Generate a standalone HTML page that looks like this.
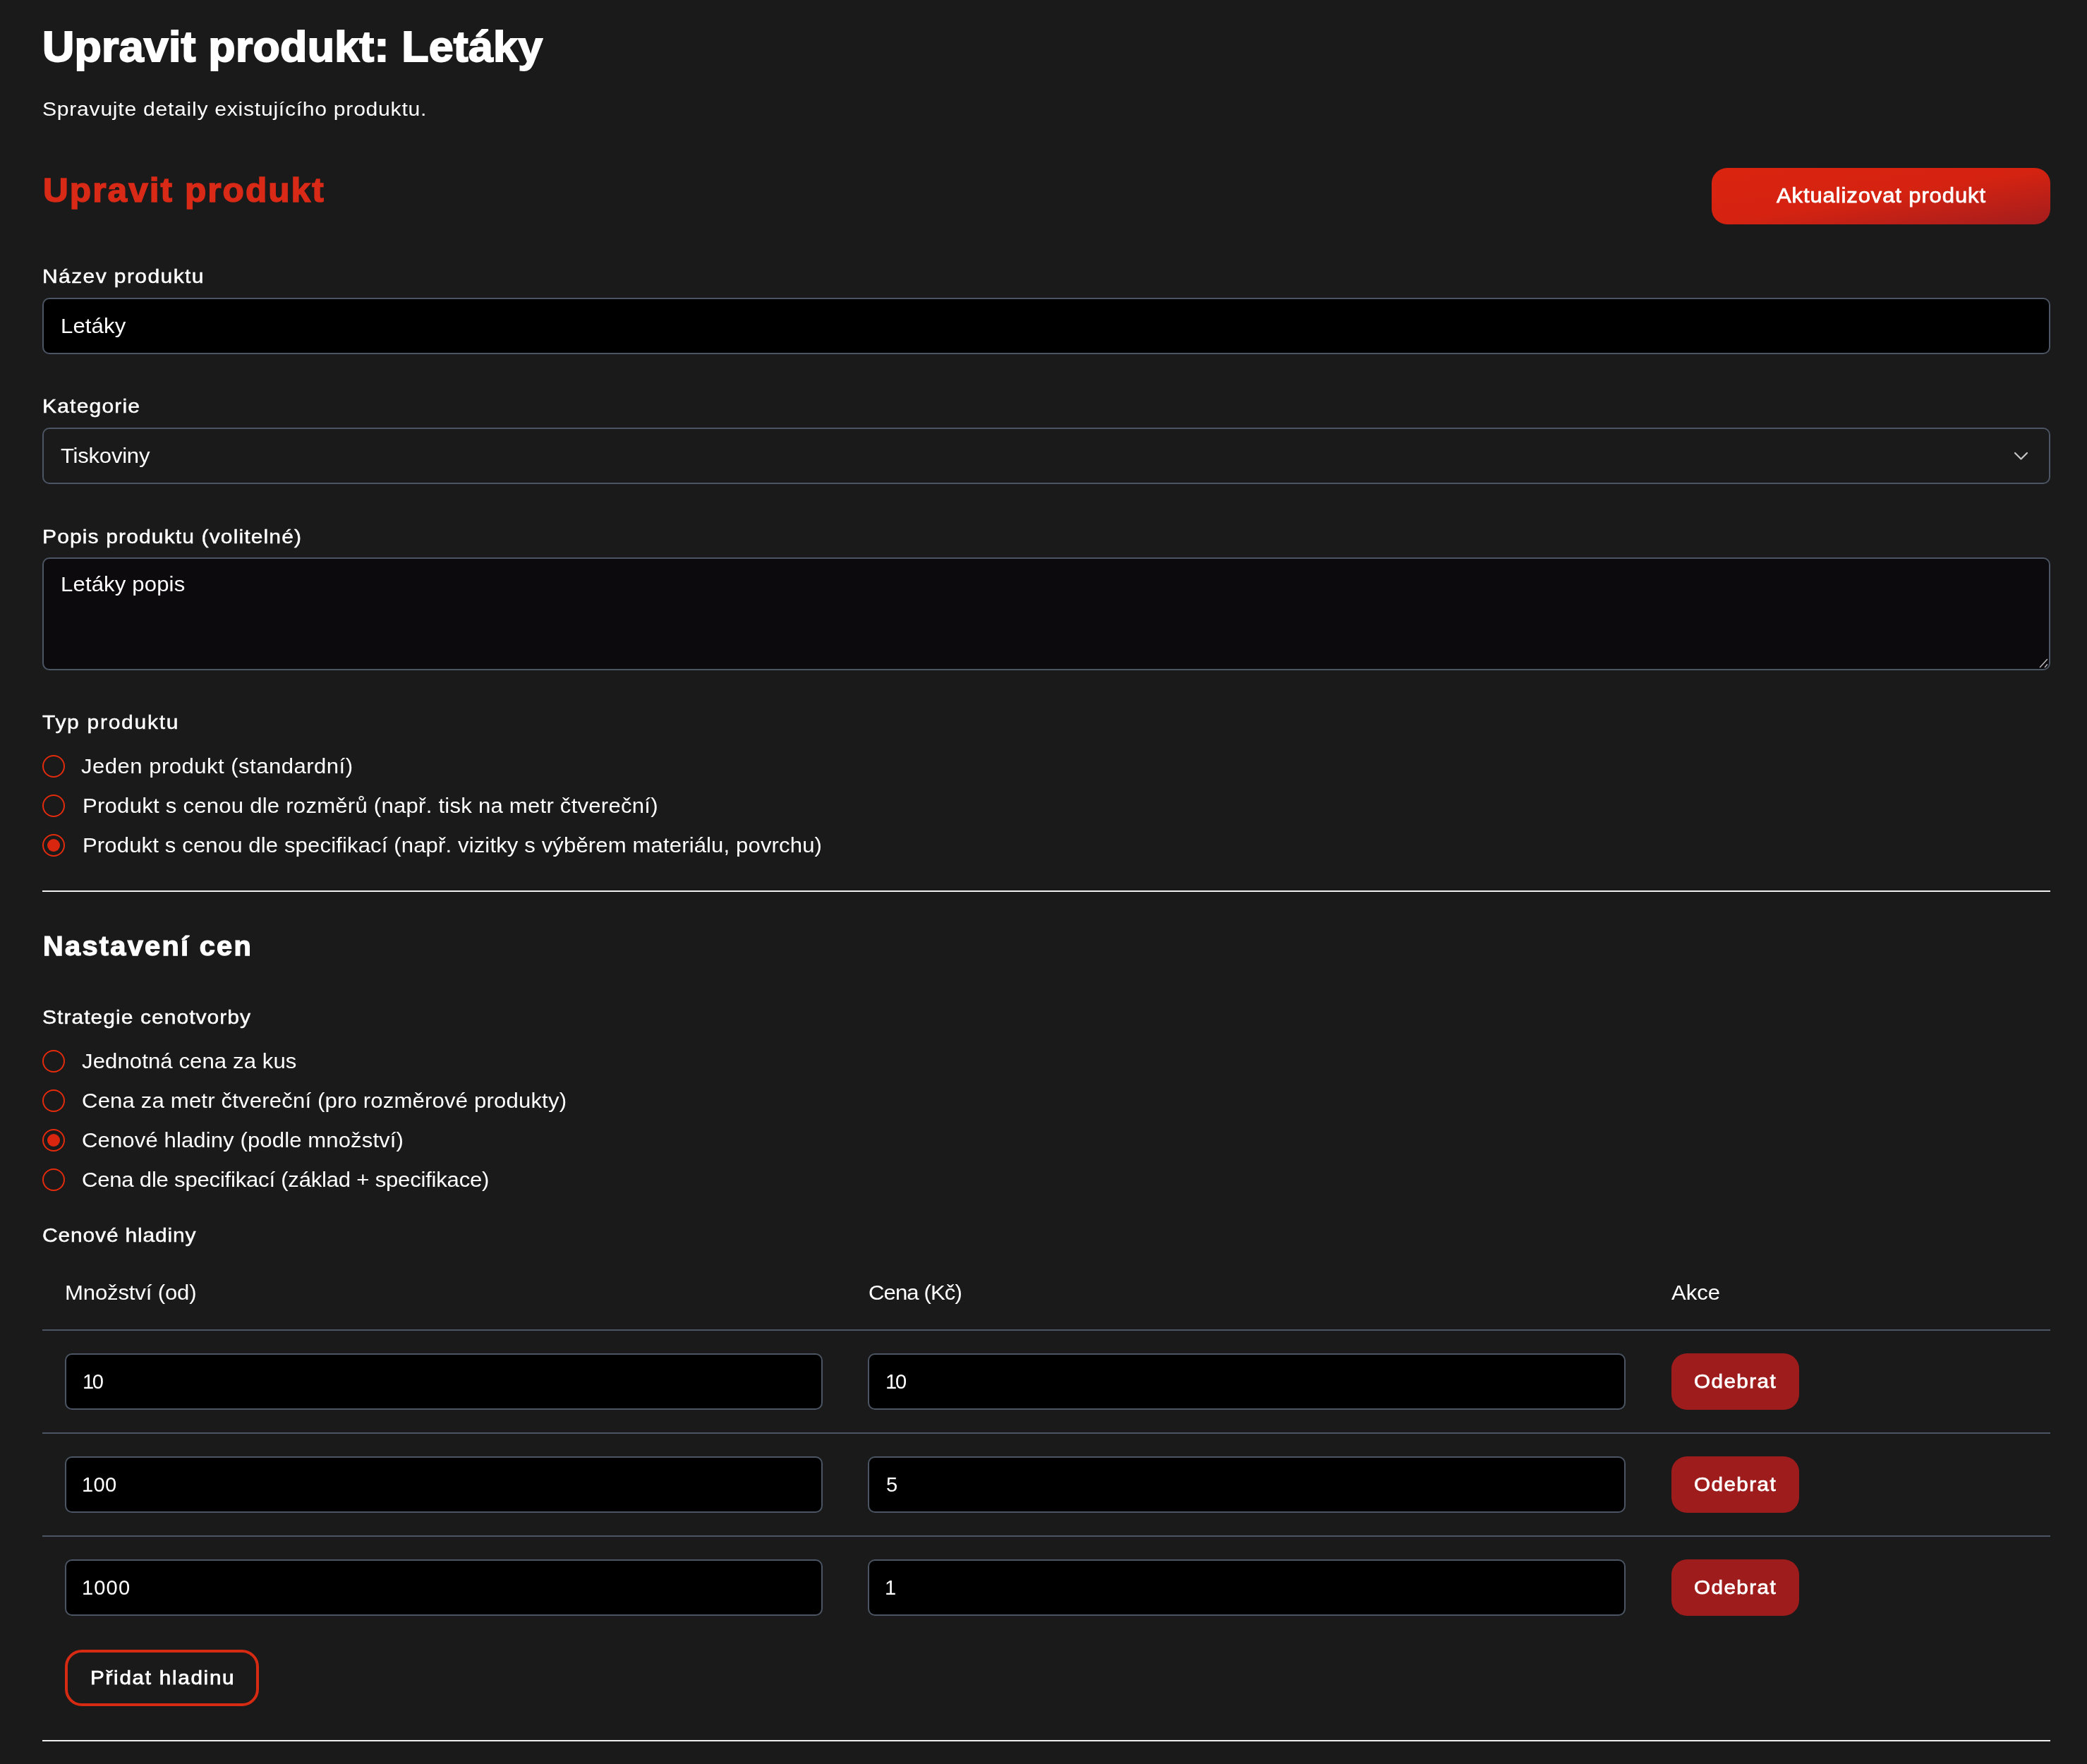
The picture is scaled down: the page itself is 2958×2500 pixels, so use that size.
<!DOCTYPE html>
<html lang="cs"><head><meta charset="utf-8"><title>Upravit produkt: Letáky</title>
<style>
html,body{margin:0;padding:0}
body{width:2958px;height:2500px;overflow:hidden;background:#1a1a1a;position:relative;font-family:"Liberation Sans",sans-serif;}
.t{position:absolute;white-space:nowrap;will-change:transform;margin:0;padding:0;display:block;font-family:"Liberation Sans",sans-serif;}
</style></head><body>
<div style="position:absolute;left:2426px;top:238px;width:480px;height:80px;box-sizing:border-box;border-radius:22px;background:linear-gradient(to bottom right,#da2410 0%,#d52311 50%,#a31d1d 100%);"></div>
<div style="position:absolute;left:60px;top:422px;width:2846px;height:80px;box-sizing:border-box;border:2px solid #4b5563;border-radius:10px;background:#000;"></div>
<div style="position:absolute;left:60px;top:606px;width:2846px;height:80px;box-sizing:border-box;border:2px solid #4b5563;border-radius:10px;"></div>
<svg style="position:absolute;left:2850px;top:636px" width="30" height="20" viewBox="0 0 30 20"><path d="M6 6 L14.5 14.5 L23 6" fill="none" stroke="#c4c4c4" stroke-width="2.3" stroke-linecap="round" stroke-linejoin="round"/></svg>
<div style="position:absolute;left:60px;top:790px;width:2846px;height:160px;box-sizing:border-box;border:2px solid #4b5563;border-radius:10px;background:#0c0a0c;"></div>
<svg style="position:absolute;left:2880px;top:925px" width="26" height="26" viewBox="0 0 26 26"><path d="M11.5 20.5 L21.5 9.5 M18.5 20.5 L21.5 16.8" fill="none" stroke="#b4b4b4" stroke-width="1.6" stroke-linecap="round"/></svg>
<div style="position:absolute;left:60px;top:1070px;width:32px;height:32px;box-sizing:border-box;border:2px solid #e32b0e;border-radius:50%;"></div>
<div style="position:absolute;left:60px;top:1126px;width:32px;height:32px;box-sizing:border-box;border:2px solid #e32b0e;border-radius:50%;"></div>
<div style="position:absolute;left:60px;top:1182px;width:32px;height:32px;box-sizing:border-box;border:2px solid #e32b0e;border-radius:50%;"></div><div style="position:absolute;left:66.7px;top:1188.7px;width:18.6px;height:18.6px;border-radius:50%;background:#d9270f"></div>
<div style="position:absolute;left:60px;top:1262px;width:2846px;height:2px;box-sizing:border-box;background:#f0f0f0;"></div>
<div style="position:absolute;left:60px;top:1488px;width:32px;height:32px;box-sizing:border-box;border:2px solid #e32b0e;border-radius:50%;"></div>
<div style="position:absolute;left:60px;top:1544px;width:32px;height:32px;box-sizing:border-box;border:2px solid #e32b0e;border-radius:50%;"></div>
<div style="position:absolute;left:60px;top:1600px;width:32px;height:32px;box-sizing:border-box;border:2px solid #e32b0e;border-radius:50%;"></div><div style="position:absolute;left:66.7px;top:1606.7px;width:18.6px;height:18.6px;border-radius:50%;background:#d9270f"></div>
<div style="position:absolute;left:60px;top:1656px;width:32px;height:32px;box-sizing:border-box;border:2px solid #e32b0e;border-radius:50%;"></div>
<div style="position:absolute;left:60px;top:1884px;width:2846px;height:2px;box-sizing:border-box;background:#4b5563;"></div>
<div style="position:absolute;left:92px;top:1918px;width:1074px;height:80px;box-sizing:border-box;border:2px solid #4b5563;border-radius:10px;background:#000;"></div>
<div style="position:absolute;left:1230px;top:1918px;width:1074px;height:80px;box-sizing:border-box;border:2px solid #4b5563;border-radius:10px;background:#000;"></div>
<div style="position:absolute;left:2369px;top:1918px;width:181px;height:80px;box-sizing:border-box;border-radius:22px;background:#9e1c1c;"></div>
<div style="position:absolute;left:92px;top:2064px;width:1074px;height:80px;box-sizing:border-box;border:2px solid #4b5563;border-radius:10px;background:#000;"></div>
<div style="position:absolute;left:1230px;top:2064px;width:1074px;height:80px;box-sizing:border-box;border:2px solid #4b5563;border-radius:10px;background:#000;"></div>
<div style="position:absolute;left:2369px;top:2064px;width:181px;height:80px;box-sizing:border-box;border-radius:22px;background:#9e1c1c;"></div>
<div style="position:absolute;left:92px;top:2210px;width:1074px;height:80px;box-sizing:border-box;border:2px solid #4b5563;border-radius:10px;background:#000;"></div>
<div style="position:absolute;left:1230px;top:2210px;width:1074px;height:80px;box-sizing:border-box;border:2px solid #4b5563;border-radius:10px;background:#000;"></div>
<div style="position:absolute;left:2369px;top:2210px;width:181px;height:80px;box-sizing:border-box;border-radius:22px;background:#9e1c1c;"></div>
<div style="position:absolute;left:60px;top:2030px;width:2846px;height:2px;box-sizing:border-box;background:#4b5563;"></div>
<div style="position:absolute;left:60px;top:2176px;width:2846px;height:2px;box-sizing:border-box;background:#4b5563;"></div>
<div style="position:absolute;left:92px;top:2338px;width:275px;height:80px;box-sizing:border-box;border:4px solid #d72a12;border-radius:24px;"></div>
<div style="position:absolute;left:60px;top:2466px;width:2846px;height:2px;box-sizing:border-box;background:#f0f0f0;"></div>
<h1 class="t" style="left:60.00px;top:35.20px;font-size:61.600px;line-height:61.600px;letter-spacing:0.1783px;color:#ffffff;font-weight:700;-webkit-text-stroke:1.9px #ffffff;transform:scaleX(1.02);transform-origin:0 0;">Upravit produkt: Letáky</h1>
<p class="t" style="left:60.00px;top:139.90px;font-size:28.200px;line-height:28.200px;letter-spacing:0.6710px;color:#ffffff;font-weight:400;transform:scaleX(1.07);transform-origin:0 0;">Spravujte detaily existujícího produktu.</p>
<h2 class="t" style="left:60.80px;top:245.40px;font-size:48.700px;line-height:48.700px;letter-spacing:1.9608px;color:#d92a17;font-weight:700;-webkit-text-stroke:1.5px #d92a17;transform:scaleX(1.02);transform-origin:0 0;">Upravit produkt</h2>
<span class="t" style="left:2517.60px;top:263.00px;font-size:29.000px;line-height:29.000px;letter-spacing:0.8165px;color:#ffffff;font-weight:400;-webkit-text-stroke:0.75px #ffffff;transform:scaleX(1.07);transform-origin:0 0;">Aktualizovat produkt</span>
<label class="t" style="left:59.80px;top:378.00px;font-size:28.100px;line-height:28.100px;letter-spacing:1.2940px;color:#ffffff;font-weight:400;-webkit-text-stroke:0.45px #ffffff;transform:scaleX(1.07);transform-origin:0 0;">Název produktu</label>
<span class="t" style="left:86.00px;top:448.20px;font-size:29.070px;line-height:29.070px;letter-spacing:0.1121px;color:#ffffff;font-weight:400;transform:scaleX(1.07);transform-origin:0 0;">Letáky</span>
<label class="t" style="left:59.80px;top:562.00px;font-size:28.100px;line-height:28.100px;letter-spacing:1.0981px;color:#ffffff;font-weight:400;-webkit-text-stroke:0.45px #ffffff;transform:scaleX(1.07);transform-origin:0 0;">Kategorie</label>
<span class="t" style="left:85.80px;top:632.00px;font-size:29.070px;line-height:29.070px;letter-spacing:-0.2336px;color:#ffffff;font-weight:400;transform:scaleX(1.07);transform-origin:0 0;">Tiskoviny</span>
<label class="t" style="left:59.70px;top:746.50px;font-size:28.100px;line-height:28.100px;letter-spacing:1.0393px;color:#ffffff;font-weight:400;-webkit-text-stroke:0.45px #ffffff;transform:scaleX(1.07);transform-origin:0 0;">Popis produktu (volitelné)</label>
<span class="t" style="left:86.00px;top:814.20px;font-size:29.070px;line-height:29.070px;letter-spacing:0.1359px;color:#ffffff;font-weight:400;transform:scaleX(1.07);transform-origin:0 0;">Letáky popis</span>
<label class="t" style="left:60.40px;top:1010.20px;font-size:28.100px;line-height:28.100px;letter-spacing:1.5803px;color:#ffffff;font-weight:400;-webkit-text-stroke:0.45px #ffffff;transform:scaleX(1.07);transform-origin:0 0;">Typ produktu</label>
<span class="t" style="left:114.70px;top:1072.00px;font-size:29.070px;line-height:29.070px;letter-spacing:0.4336px;color:#ffffff;font-weight:400;transform:scaleX(1.07);transform-origin:0 0;">Jeden produkt (standardní)</span>
<span class="t" style="left:116.60px;top:1128.00px;font-size:29.070px;line-height:29.070px;letter-spacing:0.2230px;color:#ffffff;font-weight:400;transform:scaleX(1.07);transform-origin:0 0;">Produkt s cenou dle rozměrů (např. tisk na metr čtvereční)</span>
<span class="t" style="left:116.60px;top:1184.00px;font-size:29.070px;line-height:29.070px;letter-spacing:0.1146px;color:#ffffff;font-weight:400;transform:scaleX(1.07);transform-origin:0 0;">Produkt s cenou dle specifikací (např. vizitky s výběrem materiálu, povrchu)</span>
<h3 class="t" style="left:60.60px;top:1320.50px;font-size:39.000px;line-height:39.000px;letter-spacing:2.2222px;color:#ffffff;font-weight:700;-webkit-text-stroke:1.25px #ffffff;transform:scaleX(1.02);transform-origin:0 0;">Nastavení cen</h3>
<label class="t" style="left:59.70px;top:1428.00px;font-size:28.100px;line-height:28.100px;letter-spacing:0.9543px;color:#ffffff;font-weight:400;-webkit-text-stroke:0.45px #ffffff;transform:scaleX(1.07);transform-origin:0 0;">Strategie cenotvorby</label>
<span class="t" style="left:115.50px;top:1490.00px;font-size:29.070px;line-height:29.070px;letter-spacing:0.0885px;color:#ffffff;font-weight:400;transform:scaleX(1.07);transform-origin:0 0;">Jednotná cena za kus</span>
<span class="t" style="left:115.70px;top:1546.20px;font-size:29.070px;line-height:29.070px;letter-spacing:0.1585px;color:#ffffff;font-weight:400;transform:scaleX(1.07);transform-origin:0 0;">Cena za metr čtvereční (pro rozměrové produkty)</span>
<span class="t" style="left:115.70px;top:1602.20px;font-size:29.070px;line-height:29.070px;letter-spacing:0.0935px;color:#ffffff;font-weight:400;transform:scaleX(1.07);transform-origin:0 0;">Cenové hladiny (podle množství)</span>
<span class="t" style="left:115.70px;top:1658.00px;font-size:29.070px;line-height:29.070px;letter-spacing:-0.2092px;color:#ffffff;font-weight:400;transform:scaleX(1.07);transform-origin:0 0;">Cena dle specifikací (základ + specifikace)</span>
<label class="t" style="left:60.00px;top:1737.20px;font-size:28.100px;line-height:28.100px;letter-spacing:0.7477px;color:#ffffff;font-weight:400;-webkit-text-stroke:0.45px #ffffff;transform:scaleX(1.07);transform-origin:0 0;">Cenové hladiny</label>
<span class="t" style="left:92.00px;top:1818.30px;font-size:29.070px;line-height:29.070px;letter-spacing:-0.1402px;color:#ffffff;font-weight:400;transform:scaleX(1.07);transform-origin:0 0;">Množství (od)</span>
<span class="t" style="left:1230.90px;top:1818.30px;font-size:29.070px;line-height:29.070px;letter-spacing:-0.8411px;color:#ffffff;font-weight:400;transform:scaleX(1.07);transform-origin:0 0;">Cena (Kč)</span>
<span class="t" style="left:2368.80px;top:1818.30px;font-size:29.070px;line-height:29.070px;letter-spacing:0.0000px;color:#ffffff;font-weight:400;transform:scaleX(1.07);transform-origin:0 0;">Akce</span>
<span class="t" style="left:116.60px;top:1944.20px;font-size:29.070px;line-height:29.070px;letter-spacing:-2.4000px;color:#ffffff;font-weight:400;transform:scaleX(1.0);transform-origin:0 0;">10</span>
<span class="t" style="left:1254.80px;top:1944.20px;font-size:29.070px;line-height:29.070px;letter-spacing:-2.2000px;color:#ffffff;font-weight:400;transform:scaleX(1.0);transform-origin:0 0;">10</span>
<span class="t" style="left:116.00px;top:2090.00px;font-size:29.070px;line-height:29.070px;letter-spacing:0.3000px;color:#ffffff;font-weight:400;transform:scaleX(1.0);transform-origin:0 0;">100</span>
<span class="t" style="left:1255.80px;top:2090.00px;font-size:29.070px;line-height:29.070px;letter-spacing:4.8000px;color:#ffffff;font-weight:400;transform:scaleX(1.0);transform-origin:0 0;">5</span>
<span class="t" style="left:116.00px;top:2236.00px;font-size:29.070px;line-height:29.070px;letter-spacing:1.1333px;color:#ffffff;font-weight:400;transform:scaleX(1.0);transform-origin:0 0;">1000</span>
<span class="t" style="left:1254.20px;top:2236.00px;font-size:29.070px;line-height:29.070px;letter-spacing:-17.6000px;color:#ffffff;font-weight:400;transform:scaleX(1.0);transform-origin:0 0;">1</span>
<span class="t" style="left:2401.00px;top:1944.00px;font-size:27.700px;line-height:27.700px;letter-spacing:1.3396px;color:#ffffff;font-weight:400;-webkit-text-stroke:0.75px #ffffff;transform:scaleX(1.07);transform-origin:0 0;">Odebrat</span>
<span class="t" style="left:2401.00px;top:2090.00px;font-size:27.700px;line-height:27.700px;letter-spacing:1.3396px;color:#ffffff;font-weight:400;-webkit-text-stroke:0.75px #ffffff;transform:scaleX(1.07);transform-origin:0 0;">Odebrat</span>
<span class="t" style="left:2401.00px;top:2236.00px;font-size:27.700px;line-height:27.700px;letter-spacing:1.3396px;color:#ffffff;font-weight:400;-webkit-text-stroke:0.75px #ffffff;transform:scaleX(1.07);transform-origin:0 0;">Odebrat</span>
<span class="t" style="left:127.60px;top:2364.00px;font-size:27.700px;line-height:27.700px;letter-spacing:1.6104px;color:#ffffff;font-weight:400;-webkit-text-stroke:0.75px #ffffff;transform:scaleX(1.07);transform-origin:0 0;">Přidat hladinu</span>
</body></html>
